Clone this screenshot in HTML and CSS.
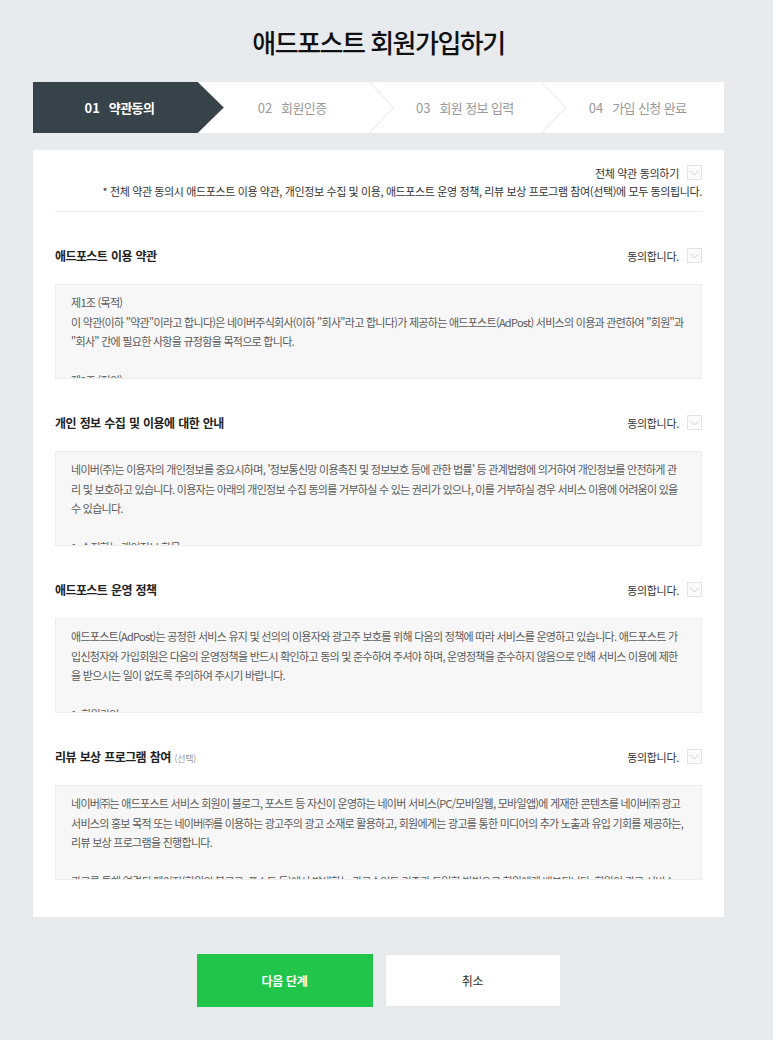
FILE: index.html
```html
<!DOCTYPE html>
<html lang="ko">
<head>
<meta charset="utf-8">
<title>애드포스트 회원가입하기</title>
<link rel="stylesheet" href="styles.css">
</head>
<body>
<div class="page">
  <h1 class="title">애드포스트 회원가입하기</h1>
  <ol class="steps">
    <li class="step active"><span class="num">01</span><span class="label">약관동의</span></li>
    <li class="step"><span class="num">02</span><span class="label">회원인증</span><svg class="sep" viewBox="0 0 25 51" preserveAspectRatio="none"><polyline points="0.5,0 24.5,25.5 0.5,51" fill="none" stroke="#e4e6e8" stroke-width="1"/></svg></li>
    <li class="step"><span class="num">03</span><span class="label">회원 정보 입력</span><svg class="sep" viewBox="0 0 25 51" preserveAspectRatio="none"><polyline points="0.5,0 24.5,25.5 0.5,51" fill="none" stroke="#e4e6e8" stroke-width="1"/></svg></li>
    <li class="step"><span class="num">04</span><span class="label">가입 신청 완료</span></li>
  </ol>

  <div class="card">
    <div class="all-agree">
      <label class="agree-row">전체 약관 동의하기 <svg class="chk" viewBox="0 0 15 15"><rect x="0.5" y="0.5" width="14" height="14" fill="#fbfbfb" stroke="#e3e3e3"/><polyline points="3.5,6 7.5,10 11.5,6" fill="none" stroke="#cfcfcf" stroke-width="1"/></svg></label>
      <p class="note">* 전체 약관 동의시 애드포스트 이용 약관, 개인정보 수집 및 이용, 애드포스트 운영 정책, 리뷰 보상 프로그램 참여(선택)에 모두 동의됩니다.</p>
    </div>

    <section class="term">
      <div class="term-head">
        <h2>애드포스트 이용 약관</h2>
        <label class="agree-row">동의합니다. <svg class="chk" viewBox="0 0 15 15"><rect x="0.5" y="0.5" width="14" height="14" fill="#fbfbfb" stroke="#e3e3e3"/><polyline points="3.5,6 7.5,10 11.5,6" fill="none" stroke="#cfcfcf" stroke-width="1"/></svg></label>
      </div>
      <div class="term-box">
        <p>제1조 (목적)<br>이 약관(이하 "약관"이라고 합니다)은 네이버주식회사(이하 "회사"라고 합니다)가 제공하는 애드포스트(AdPost) 서비스의 이용과 관련하여 "회원"과<br>"회사" 간에 필요한 사항을 규정함을 목적으로 합니다.</p>
        <p>제2조 (정의)<br>이 약관에서 사용하는 용어의 정의는 다음과 같습니다.</p>
      </div>
    </section>

    <section class="term">
      <div class="term-head">
        <h2>개인 정보 수집 및 이용에 대한 안내</h2>
        <label class="agree-row">동의합니다. <svg class="chk" viewBox="0 0 15 15"><rect x="0.5" y="0.5" width="14" height="14" fill="#fbfbfb" stroke="#e3e3e3"/><polyline points="3.5,6 7.5,10 11.5,6" fill="none" stroke="#cfcfcf" stroke-width="1"/></svg></label>
      </div>
      <div class="term-box">
        <p>네이버(주)는 이용자의 개인정보를 중요시하며, '정보통신망 이용촉진 및 정보보호 등에 관한 법률' 등 관계법령에 의거하여 개인정보를 안전하게 관<br>리 및 보호하고 있습니다. 이용자는 아래의 개인정보 수집 동의를 거부하실 수 있는 권리가 있으나, 이를 거부하실 경우 서비스 이용에 어려움이 있을<br>수 있습니다.</p>
        <p>1. 수집하는 개인정보 항목<br>회원가입 시 아래와 같은 개인정보를 수집하고 있습니다.</p>
      </div>
    </section>

    <section class="term">
      <div class="term-head">
        <h2>애드포스트 운영 정책</h2>
        <label class="agree-row">동의합니다. <svg class="chk" viewBox="0 0 15 15"><rect x="0.5" y="0.5" width="14" height="14" fill="#fbfbfb" stroke="#e3e3e3"/><polyline points="3.5,6 7.5,10 11.5,6" fill="none" stroke="#cfcfcf" stroke-width="1"/></svg></label>
      </div>
      <div class="term-box">
        <p>애드포스트(AdPost)는 공정한 서비스 유지 및 선의의 이용자와 광고주 보호를 위해 다음의 정책에 따라 서비스를 운영하고 있습니다. 애드포스트 가<br>입신청자와 가입회원은 다음의 운영정책을 반드시 확인하고 동의 및 준수하여 주셔야 하며, 운영정책을 준수하지 않음으로 인해 서비스 이용에 제한<br>을 받으시는 일이 없도록 주의하여 주시기 바랍니다.</p>
        <p>1. 회원가입<br>애드포스트 회원가입은 네이버 회원만 가능합니다.</p>
      </div>
    </section>

    <section class="term">
      <div class="term-head">
        <h2>리뷰 보상 프로그램 참여 <small>(선택)</small></h2>
        <label class="agree-row">동의합니다. <svg class="chk" viewBox="0 0 15 15"><rect x="0.5" y="0.5" width="14" height="14" fill="#fbfbfb" stroke="#e3e3e3"/><polyline points="3.5,6 7.5,10 11.5,6" fill="none" stroke="#cfcfcf" stroke-width="1"/></svg></label>
      </div>
      <div class="term-box">
        <p>네이버㈜는 애드포스트 서비스 회원이 블로그, 포스트 등 자신이 운영하는 네이버 서비스(PC/모바일웹, 모바일앱)에 게재한 콘텐츠를 네이버㈜ 광고<br>서비스의 홍보 목적 또는 네이버㈜를 이용하는 광고주의 광고 소재로 활용하고, 회원에게는 광고를 통한 미디어의 추가 노출과 유입 기회를 제공하는,<br>리뷰 보상 프로그램을 진행합니다.</p>
        <p>광고를 통해 연결된 페이지(회원의 블로그, 포스트 등)에서 발생하는 광고수익도 기존과 동일한 방법으로 회원에게 배분됩니다. 회원이 광고 서비스<br>이용을 원하지 않는 경우 언제든지 참여를 철회할 수 있습니다.</p>
      </div>
    </section>
  </div>

  <div class="buttons">
    <button class="btn primary" type="button">다음 단계</button>
    <button class="btn" type="button">취소</button>
  </div>
</div>
</body>
</html>
```

FILE: styles.css
```css
* { box-sizing: border-box; }

body {
  margin: 0;
  padding: 0 16px 0 0;
  background: #e8ebee;
  font-family: "Noto Sans CJK KR", "Liberation Sans", sans-serif;
  color: #333;
}

.page {
  width: 691px;
  margin: 0 auto;
  padding: 22px 0 30px;
}

.title {
  margin: 0;
  text-align: center;
  font-size: 26px;
  line-height: 40px;
  font-weight: 500;
  color: #111;
  letter-spacing: -1.5px;
}

.steps {
  list-style: none;
  margin: 20px 0 0;
  padding: 0;
  display: grid;
  grid-template-columns: repeat(4, 1fr);
  height: 51px;
  background: #fff;
}

.step {
  position: relative;
  isolation: isolate;
  display: flex;
  align-items: center;
  justify-content: center;
  font-size: 13px;
  color: #999;
  letter-spacing: -0.6px;
}

.step .num {
  margin-right: 9px;
  letter-spacing: 0;
}

.step.active {
  color: #fff;
  font-weight: 700;
  z-index: 1;
}

.step.active::before {
  content: "";
  position: absolute;
  top: 0;
  bottom: 0;
  left: 0;
  right: -18px;
  background: #37434b;
  clip-path: polygon(0 0, calc(100% - 26px) 0, 100% 50%, calc(100% - 26px) 100%, 0 100%);
  z-index: -1;
}

.step .sep {
  position: absolute;
  top: 0;
  right: -15px;
  width: 25px;
  height: 51px;
}

.card {
  margin-top: 17px;
  background: #fff;
  padding: 15px 22px 37px;
}

.all-agree {
  border-bottom: 1px solid #eeeeee;
  padding-bottom: 12px;
}

.agree-row {
  display: flex;
  justify-content: flex-end;
  align-items: center;
  gap: 8px;
  height: 15px;
  font-size: 11px;
  color: #333;
  letter-spacing: -0.3px;
}

.chk {
  width: 15px;
  height: 15px;
  flex: none;
}

.note {
  margin: 3px 0 0;
  text-align: right;
  font-size: 11px;
  line-height: 16px;
  color: #333;
  letter-spacing: -0.38px;
}

.term {
  padding-top: 36px;
}

.term-head {
  display: flex;
  justify-content: space-between;
  align-items: center;
  height: 15px;
}

.term-head h2 {
  margin: 0;
  font-size: 12px;
  font-weight: 700;
  color: #222;
  letter-spacing: -0.6px;
  word-spacing: 1px;
}

.term-head h2 small {
  font-size: 9px;
  font-weight: 400;
  color: #999;
  letter-spacing: -0.3px;
  word-spacing: 0;
}

.term-box {
  margin-top: 21px;
  height: 95px;
  overflow: hidden;
  border: 1px solid #ededed;
  background: #f7f7f7;
  padding: 8px 15px;
  font-size: 11px;
  line-height: 19.5px;
  color: #5a5a5a;
  letter-spacing: -0.72px;
}

.term-box p {
  margin: 0 0 19.5px;
  white-space: nowrap;
}

.buttons {
  display: flex;
  justify-content: center;
  gap: 12px;
  margin-top: 37px;
}

.btn {
  width: 176px;
  height: 53px;
  border: 1px solid #e6e8ea;
  background: #fff;
  font-family: inherit;
  font-size: 12px;
  color: #333;
  letter-spacing: -0.3px;
}

.btn.primary {
  border-color: #21c54a;
  background: #21c54a;
  color: #fff;
  font-weight: 700;
}
```
